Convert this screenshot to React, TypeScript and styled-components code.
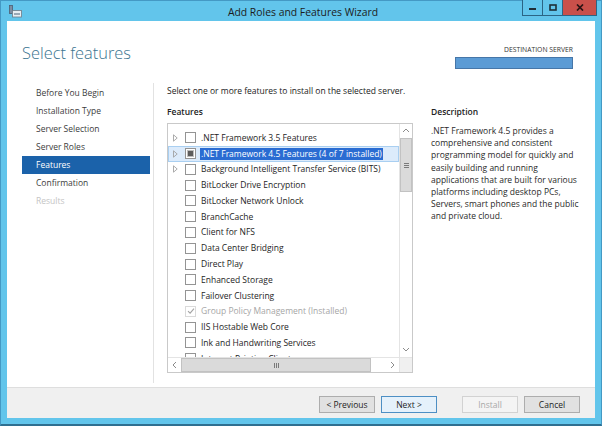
import * as React from 'react';
import styled, { createGlobalStyle, css } from 'styled-components';

const GlobalStyle = createGlobalStyle`
  html, body {
    margin: 0;
    padding: 0;
    background: #62c5eb;
  }
  body {
    font-family: 'Open Sans', 'Noto Sans', sans-serif;
    overflow: hidden;
  }
  * {
    box-sizing: border-box;
  }
`;

const FONT = 8.5;

// window chrome
const Window = styled.div`
  width: 602px;
  height: 426px;
  background: #62c5eb;
  border: 1px solid #4499c4;
  border-bottom: 2px solid #2f6f90;
  display: flex;
  flex-direction: column;
`;

const TitleBar = styled.div`
  height: 20px;
  flex: none;
  display: grid;
  grid-template-columns: 1fr auto 1fr;
  align-items: center;
  padding: 0 4px 0 8px;
`;

const TitleText = styled.div`
  font-size: 10.4px;
  color: #1c1c1c;
  white-space: nowrap;
`;

const Controls = styled.div`
  justify-self: end;
  align-self: start;
  margin-top: -1px;
  display: flex;
`;

const CtlButton = styled.div<{ $w: number; $close?: boolean }>`
  width: ${(p) => p.$w}px;
  height: 16px;
  margin-left: -1px;
  border: 1px solid #2b6585;
  border-top: none;
  background: ${(p) => (p.$close ? '#c9504a' : '#62c5eb')};
  display: flex;
  align-items: center;
  justify-content: center;
`;

const Client = styled.div`
  flex: 1;
  margin: 0 6px 6px 6px;
  background: #fff;
  display: flex;
  flex-direction: column;
  min-height: 0;
`;

// header
const Header = styled.div`
  height: 61px;
  flex: none;
  display: flex;
  justify-content: space-between;
  padding: 0 22px 0 15px;
`;

const Heading = styled.h1`
  margin: 0;
  padding-top: 21px;
  font-size: 16.4px;
  line-height: 22px;
  font-weight: 300;
  color: #3a7490;
`;

const Destination = styled.div`
  padding-top: 24px;
  display: flex;
  flex-direction: column;
  align-items: flex-end;
`;

const DestLabel = styled.div`
  font-size: 6.8px;
  line-height: 9px;
  color: #333;
`;

const ServerBar = styled.div`
  margin-top: 3px;
  width: 118px;
  height: 12px;
  background: #5b9bd5;
  border: 1px solid #4676a8;
`;

// body
const Main = styled.div`
  flex: 1;
  display: flex;
  min-height: 0;
`;

const Nav = styled.div`
  width: 146px;
  flex: none;
  padding: 2px 3px 0 15px;
`;

const NavItem = styled.div<{ $active?: boolean; $disabled?: boolean }>`
  height: 18px;
  line-height: 18px;
  padding-left: 14px;
  font-size: ${FONT}px;
  color: #3c3c3c;
  white-space: nowrap;
  ${(p) =>
    p.$active &&
    css`
      background: #1b62aa;
      color: #fff;
    `}
  ${(p) =>
    p.$disabled &&
    css`
      color: #c4c4c4;
    `}
`;

const Divider = styled.div`
  width: 1px;
  flex: none;
  background: #e2e2e2;
  margin: 1px 0 4px 0;
`;

const Content = styled.div`
  flex: 1;
  padding: 2px 13px 0 13px;
  min-width: 0;
  font-size: ${FONT}px;
  color: #222;
`;

const Intro = styled.div`
  line-height: 14px;
  white-space: nowrap;
`;

const Columns = styled.div`
  display: flex;
  gap: 18px;
  margin-top: 7px;
`;

const FeatureCol = styled.div`
  width: 246px;
  flex: none;
`;

const SectionLabel = styled.div`
  font-weight: 600;
  line-height: 14px;
  color: #222;
`;

const ListBox = styled.div`
  margin-top: 4px;
  height: 250px;
  border: 1px solid #c9c9c9;
  display: grid;
  grid-template-columns: 1fr 13px;
  grid-template-rows: 1fr 15px;
`;

const Rows = styled.div`
  overflow: hidden;
  padding-top: 6px;
`;

const Row = styled.div<{ $selected?: boolean }>`
  height: 15.77px;
  display: flex;
  align-items: center;
  white-space: nowrap;
  border: 1px solid transparent;
  ${(p) =>
    p.$selected &&
    css`
      background: #dcebfb;
      border-color: #a9cff1;
    `}
`;

const ExpandSlot = styled.div`
  width: 13px;
  flex: none;
  display: flex;
  justify-content: center;
`;

const CheckBox = styled.span<{ $state: 'off' | 'partial' | 'installed' }>`
  width: 11px;
  height: 11px;
  flex: none;
  margin-left: 3px;
  border: 1px solid ${(p) => (p.$state === 'installed' ? '#dadada' : '#949494')};
  background: #fff;
  display: flex;
  align-items: center;
  justify-content: center;
  ${(p) =>
    p.$state === 'partial' &&
    css`
      &::after {
        content: '';
        width: 5px;
        height: 5px;
        background: #5c5c5c;
        box-shadow: 0 0 0 1px #bdbdbd;
      }
    `}
`;

const ItemText = styled.span<{ $muted?: boolean; $selected?: boolean }>`
  margin-left: 4px;
  padding: 0 1px;
  line-height: 12px;
  color: ${(p) => (p.$muted ? '#a6a6a6' : '#1e1e1e')};
  ${(p) =>
    p.$selected &&
    css`
      background: #2a6cd2;
      color: #fff;
    `}
`;

const VScroll = styled.div`
  border-left: 1px solid #e4e4e4;
  display: flex;
  flex-direction: column;
  align-items: stretch;
`;

const Arrow = styled.div`
  height: 14px;
  flex: none;
  display: flex;
  align-items: center;
  justify-content: center;
`;

const VThumb = styled.div`
  height: 54px;
  background: #dadada;
  border: 1px solid #c2c2c2;
  display: flex;
  align-items: center;
  justify-content: center;
`;

const Track = styled.div`
  flex: 1;
`;

const HScroll = styled.div`
  border-top: 1px solid #e4e4e4;
  display: flex;
  align-items: stretch;
`;

const HArrow = styled.div`
  width: 13px;
  flex: none;
  display: flex;
  align-items: center;
  justify-content: center;
`;

const HThumb = styled.div`
  width: 190px;
  background: #dadada;
  border: 1px solid #c2c2c2;
  display: flex;
  align-items: center;
  justify-content: center;
`;

const Corner = styled.div`
  background: #f0f0f0;
  border-top: 1px solid #e4e4e4;
  border-left: 1px solid #e4e4e4;
`;

const DescCol = styled.div`
  flex: 1;
  min-width: 0;
`;

const DescText = styled.p`
  margin: 6px 0 0 0;
  line-height: 12.2px;
  color: #2a2a2a;
  white-space: nowrap;
`;

// footer
const Footer = styled.div`
  height: 31px;
  flex: none;
  background: #f0f0f0;
  border-top: 1px solid #dedede;
  display: flex;
  justify-content: flex-end;
  align-items: flex-start;
  padding: 8px 15px 0 0;
`;

const Btn = styled.button<{ $kind?: 'primary' | 'disabled'; $gap?: number }>`
  width: 56px;
  height: 17px;
  margin-left: ${(p) => p.$gap ?? 6}px;
  padding: 0;
  font-family: inherit;
  font-size: ${FONT}px;
  color: #1e1e1e;
  background: #e1e1e1;
  border: 1px solid #adadad;
  ${(p) =>
    p.$kind === 'primary' &&
    css`
      background: #e5f1fb;
      border-color: #4d8fc4;
    `}
  ${(p) =>
    p.$kind === 'disabled' &&
    css`
      background: #f4f4f4;
      border-color: #d2d2d2;
      color: #a8a8a8;
    `}
`;

type Feature = {
  label: string;
  expand?: boolean;
  state?: 'off' | 'partial' | 'installed';
  selected?: boolean;
};

const features: Feature[] = [
  { label: '.NET Framework 3.5 Features', expand: true },
  { label: '.NET Framework 4.5 Features (4 of 7 installed)', expand: true, state: 'partial', selected: true },
  { label: 'Background Intelligent Transfer Service (BITS)', expand: true },
  { label: 'BitLocker Drive Encryption' },
  { label: 'BitLocker Network Unlock' },
  { label: 'BranchCache' },
  { label: 'Client for NFS' },
  { label: 'Data Center Bridging' },
  { label: 'Direct Play' },
  { label: 'Enhanced Storage' },
  { label: 'Failover Clustering' },
  { label: 'Group Policy Management (Installed)', state: 'installed' },
  { label: 'IIS Hostable Web Core' },
  { label: 'Ink and Handwriting Services' },
  { label: 'Internet Printing Client' },
];

const steps = [
  'Before You Begin',
  'Installation Type',
  'Server Selection',
  'Server Roles',
  'Features',
  'Confirmation',
  'Results',
];

const description = [
  '.NET Framework 4.5 provides a',
  'comprehensive and consistent',
  'programming model for quickly and',
  'easily building and running',
  'applications that are built for various',
  'platforms including desktop PCs,',
  'Servers, smart phones and the public',
  'and private cloud.',
];

const Chevron = ({ dir }: { dir: 'up' | 'down' | 'left' | 'right' }) => {
  const d = {
    up: 'M1 5 L4 2 L7 5',
    down: 'M1 2 L4 5 L7 2',
    left: 'M5 1 L2 4 L5 7',
    right: 'M2 1 L5 4 L2 7',
  }[dir];
  return (
    <svg width="8" height="8" viewBox="0 0 8 8">
      <path d={d} fill="none" stroke="#8c8c8c" strokeWidth="1" />
    </svg>
  );
};

const Expander = () => (
  <svg width="5" height="8" viewBox="0 0 5 8">
    <path d="M0.5 0.8 L4.2 4 L0.5 7.2 Z" fill="none" stroke="#a2a2a2" strokeWidth="0.9" />
  </svg>
);

const CheckMark = () => (
  <svg width="8" height="8" viewBox="0 0 8 8">
    <path d="M1 4.2 L3.1 6.2 L7 1.6" fill="none" stroke="#a3a3a3" strokeWidth="1.1" />
  </svg>
);

const AppIcon = () => (
  <svg width="14" height="13" viewBox="0 0 14 13">
    <rect x="0.5" y="0.5" width="3" height="8" fill="#7c8ea3" stroke="#4d5f73" strokeWidth="0.8" />
    <rect x="3.5" y="5.5" width="9" height="6.5" fill="#e8eef3" stroke="#6f7c88" strokeWidth="0.8" />
    <rect x="5" y="8" width="6" height="2" fill="#9aa8b5" />
  </svg>
);

const App = () => {
  return (
    <React.Fragment>
      <GlobalStyle />
      <Window>
        <TitleBar>
          <div>
            <AppIcon />
          </div>
          <TitleText>Add Roles and Features Wizard</TitleText>
          <Controls>
            <CtlButton $w={21}>
              <svg width="7" height="7" viewBox="0 0 7 7">
                <rect x="0" y="4" width="7" height="2" fill="#1f2f38" />
              </svg>
            </CtlButton>
            <CtlButton $w={21}>
              <svg width="8" height="7" viewBox="0 0 8 7">
                <rect x="1" y="1" width="6" height="5" fill="none" stroke="#1f2f38" strokeWidth="1.6" />
              </svg>
            </CtlButton>
            <CtlButton $w={35} $close>
              <svg width="8" height="7" viewBox="0 0 8 7">
                <path d="M1 0.5 L7 6.5 M7 0.5 L1 6.5" stroke="#2a1414" strokeWidth="1.7" />
              </svg>
            </CtlButton>
          </Controls>
        </TitleBar>

        <Client>
          <Header>
            <Heading>Select features</Heading>
            <Destination>
              <DestLabel>DESTINATION SERVER</DestLabel>
              <ServerBar />
            </Destination>
          </Header>

          <Main>
            <Nav>
              {steps.map((s) => (
                <NavItem key={s} $active={s === 'Features'} $disabled={s === 'Results'}>
                  {s}
                </NavItem>
              ))}
            </Nav>
            <Divider />
            <Content>
              <Intro>Select one or more features to install on the selected server.</Intro>
              <Columns>
                <FeatureCol>
                  <SectionLabel>Features</SectionLabel>
                  <ListBox>
                    <Rows>
                      {features.map((f) => (
                        <Row key={f.label} $selected={f.selected}>
                          <ExpandSlot>{f.expand && <Expander />}</ExpandSlot>
                          <CheckBox $state={f.state ?? 'off'}>
                            {f.state === 'installed' && <CheckMark />}
                          </CheckBox>
                          <ItemText $muted={f.state === 'installed'} $selected={f.selected}>
                            {f.label}
                          </ItemText>
                        </Row>
                      ))}
                    </Rows>
                    <VScroll>
                      <Arrow>
                        <Chevron dir="up" />
                      </Arrow>
                      <VThumb>
                        <svg width="5" height="5" viewBox="0 0 5 5">
                          <path d="M0 0.5 H5 M0 2.5 H5 M0 4.5 H5" stroke="#7a7a7a" strokeWidth="1" />
                        </svg>
                      </VThumb>
                      <Track />
                      <Arrow>
                        <Chevron dir="down" />
                      </Arrow>
                    </VScroll>
                    <HScroll>
                      <HArrow>
                        <Chevron dir="left" />
                      </HArrow>
                      <HThumb>
                        <svg width="5" height="5" viewBox="0 0 5 5">
                          <path d="M0.5 0 V5 M2.5 0 V5 M4.5 0 V5" stroke="#7a7a7a" strokeWidth="1" />
                        </svg>
                      </HThumb>
                      <Track />
                      <HArrow>
                        <Chevron dir="right" />
                      </HArrow>
                    </HScroll>
                    <Corner />
                  </ListBox>
                </FeatureCol>
                <DescCol>
                  <SectionLabel>Description</SectionLabel>
                  <DescText>
                    {description.map((line, i) => (
                      <React.Fragment key={i}>
                        {line}
                        {i < description.length - 1 && <br />}
                      </React.Fragment>
                    ))}
                  </DescText>
                </DescCol>
              </Columns>
            </Content>
          </Main>

          <Footer>
            <Btn>&lt; Previous</Btn>
            <Btn $kind="primary">Next &gt;</Btn>
            <Btn $kind="disabled" $gap={25}>
              Install
            </Btn>
            <Btn>Cancel</Btn>
          </Footer>
        </Client>
      </Window>
    </React.Fragment>
  );
};

export default App;
